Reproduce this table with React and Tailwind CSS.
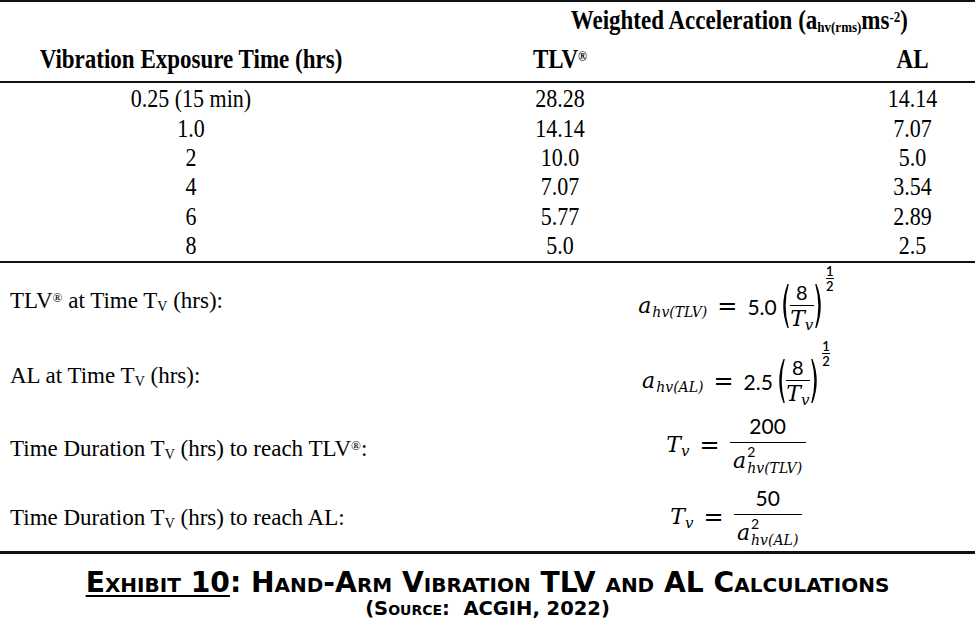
import React from "react";

const rows = [
  ["0.25 (15 min)", "28.28", "14.14"],
  ["1.0", "14.14", "7.07"],
  ["2", "10.0", "5.0"],
  ["4", "7.07", "3.54"],
  ["6", "5.77", "2.89"],
  ["8", "5.0", "2.5"],
];

// math italic letter a with its subscript (and optional square)
function A({ sub, sq }) {
  return (
    <span className="inline-flex items-center">
      <span className="font-['DejaVu_Serif',serif] text-[22px] italic leading-none">a</span>
      <span className="ml-[1px] inline-flex flex-col leading-none">
        {sq ? (
          <span className="font-['Lato',sans-serif] text-[14px] leading-[12px]">2</span>
        ) : (
          <span className="h-[10px]"></span>
        )}
        <span className="mt-[2px] font-['DejaVu_Serif',serif] text-[14px] italic leading-[16px]">
          hv({sub})
        </span>
      </span>
    </span>
  );
}

function Tv() {
  return (
    <span className="inline-flex items-baseline font-['DejaVu_Serif',serif] italic leading-none">
      <span className="text-[22px]">T</span>
      <span className="relative top-[4px] text-[15px]">v</span>
    </span>
  );
}

function Paren({ right }) {
  return (
    <svg width="10" height="46" viewBox="0 0 10 46" className="shrink-0">
      <path
        d={right ? "M1.5 1 Q10 23 1.5 45 L0.2 45 Q6.5 23 0.2 1 Z" : "M8.5 1 Q0 23 8.5 45 L9.8 45 Q3.5 23 9.8 1 Z"}
        fill="black"
      />
    </svg>
  );
}

function Power({ coef }) {
  return (
    <span className="inline-flex items-center">
      <span className="mr-[2px] font-['Lato',sans-serif] text-[21px] leading-none">{coef}</span>
      <Paren />
      <span className="mx-[1px] inline-flex flex-col items-center leading-none">
        <span className="font-['Lato',sans-serif] text-[20px] leading-[20px]">8</span>
        <span className="mt-[3px] w-[24px] border-t border-black"></span>
        <span className="mt-[2px] h-[22px]">
          <Tv />
        </span>
      </span>
      <Paren right />
      <span className="relative -top-[17px] ml-[1px] inline-flex flex-col items-center self-start font-['Lato',sans-serif] text-[13px] font-semibold leading-[12px]">
        <span>1</span>
        <span className="my-[1px] w-[8px] border-t border-black"></span>
        <span>2</span>
      </span>
    </span>
  );
}

function Eq() {
  return <span className="mx-[10px] font-['DejaVu_Sans',sans-serif] text-[24px] leading-none">=</span>;
}

function Frac({ num, line, children }) {
  return (
    <span className="inline-flex flex-col items-center">
      <span className="font-['Lato',sans-serif] text-[21px] leading-[24px]">{num}</span>
      <span className={`mt-[4px] border-t border-black ${line}`}></span>
      <span className="mt-[3px]">{children}</span>
    </span>
  );
}

function Label({ children }) {
  return (
    <div className="flex items-center pl-[10px] font-['Liberation_Serif','Times_New_Roman',serif] text-[23px] text-black">
      <span>{children}</span>
    </div>
  );
}

function TvText() {
  return (
    <>
      T<span className="relative top-[3px] text-[14px]">V</span>
    </>
  );
}

function Cell({ children }) {
  return (
    <div className="flex h-[29.4px] items-center justify-center">
      <span className="inline-block scale-y-[1.15]">{children}</span>
    </div>
  );
}

export default function App() {
  return (
    <div className="h-[633px] w-[975px] overflow-hidden bg-white text-black">
      <div className="border-t-2 border-[#111]"></div>

      {/* header */}
      <div className="grid h-[79px] grid-cols-[382px_356px_112px_125px] grid-rows-[38px_41px] font-['Liberation_Serif','Times_New_Roman',serif] text-[23px] font-bold">
        <div className="col-span-3 col-start-2 flex items-center justify-end pr-[67px]">
          <span className="inline-block scale-y-[1.15]">
            Weighted Acceleration (a
            <span className="relative top-[3px] text-[13px]">hv(rms)</span>
            ms<sup className="text-[13px]">-2</sup>)
          </span>
        </div>
        <div className="col-start-1 row-start-2 flex items-center justify-center">
          <span className="inline-block scale-y-[1.15]">Vibration Exposure Time (hrs)</span>
        </div>
        <div className="row-start-2 flex items-center justify-center">
          <span className="inline-block scale-y-[1.15]">
            TLV<sup className="text-[12px]">®</sup>
          </span>
        </div>
        <div className="col-start-4 row-start-2 flex items-center justify-center">
          <span className="inline-block scale-y-[1.15]">AL</span>
        </div>
      </div>

      <div className="border-t-2 border-[#111]"></div>

      {/* values */}
      <div className="grid grid-cols-[382px_356px_112px_125px] py-[1px] font-['Liberation_Serif','Times_New_Roman',serif] text-[22px]">
        {rows.map((r, i) => (
          <React.Fragment key={i}>
            <Cell>{r[0]}</Cell>
            <Cell>{r[1]}</Cell>
            <div></div>
            <Cell>{r[2]}</Cell>
          </React.Fragment>
        ))}
      </div>

      <div className="border-t-2 border-[#111]"></div>

      {/* formulas */}
      <div className="grid grid-cols-[497px_478px] grid-rows-[76px_74px_72px_66px]">
        <Label>
          TLV<sup className="text-[13px]">®</sup>&nbsp;at Time <TvText />&nbsp;(hrs):
        </Label>
        <div className="flex items-center justify-center pt-[10px]">
          <A sub="TLV" />
          <Eq />
          <Power coef="5.0" />
        </div>

        <Label>
          AL at Time <TvText />&nbsp;(hrs):
        </Label>
        <div className="flex items-center justify-center pt-[10px]">
          <A sub="AL" />
          <Eq />
          <Power coef="2.5" />
        </div>

        <Label>
          Time Duration <TvText />&nbsp;(hrs) to reach TLV<sup className="text-[13px]">®</sup>:
        </Label>
        <div className="flex items-center justify-center pb-[8px]">
          <Tv />
          <Eq />
          <Frac num="200" line="w-[76px]">
            <A sub="TLV" sq />
          </Frac>
        </div>

        <Label>
          Time Duration <TvText />&nbsp;(hrs) to reach AL:
        </Label>
        <div className="flex items-center justify-center pb-[2px]">
          <Tv />
          <Eq />
          <Frac num="50" line="w-[68px]">
            <A sub="AL" sq />
          </Frac>
        </div>
      </div>

      <div className="border-t-[3px] border-[#111]"></div>

      {/* caption */}
      <div className="pt-[14px] text-center font-['DejaVu_Sans','Liberation_Sans',sans-serif] font-bold [font-variant-caps:small-caps]">
        <div className="text-[28.2px] leading-[30px]">
          <span className="underline decoration-2 underline-offset-[3px]">Exhibit 10</span>: Hand-Arm Vibration TLV and AL Calculations
        </div>
        <div className="text-[19.5px] leading-[22px]">(Source: &nbsp;ACGIH, 2022)</div>
      </div>
    </div>
  );
}
